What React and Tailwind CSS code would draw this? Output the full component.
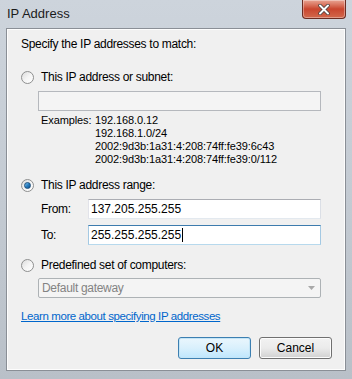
import React from 'react'

const font = { fontFamily: '"Liberation Sans", Arial, sans-serif' }

function Radio({ checked }) {
  return (
    <span className="relative flex h-[13px] w-[13px] shrink-0 items-center justify-center rounded-full border border-[#8e8f8f] bg-gradient-to-br from-[#dcdcdc] via-[#f4f4f4] to-[#ffffff]">
      {checked && (
        <span className="h-[7px] w-[7px] rounded-full border border-[#1a4d7a] bg-gradient-to-br from-[#7cc3f0] via-[#2a7fc0] to-[#0d4f8c]" />
      )}
    </span>
  )
}

function Btn({ children, primary }) {
  return (
    <button
      className={
        primary
          ? 'h-[22px] w-[73px] rounded-[3px] border border-[#3c7fb1] bg-gradient-to-b from-[#eaf6fd] via-[#d9f0fc] to-[#bee6fd] text-[12px] text-black shadow-[inset_0_0_0_1px_#c4e5f6]'
          : 'h-[22px] w-[73px] rounded-[3px] border border-[#707070] bg-gradient-to-b from-[#f2f2f2] via-[#ebebeb] to-[#d1d1d1] text-[12px] text-black shadow-[inset_0_0_0_1px_#fcfcfc]'
      }
    >
      {children}
    </button>
  )
}

export default function App() {
  return (
    <div style={font} className="flex h-[379px] w-[352px] flex-col overflow-hidden bg-gradient-to-b from-[#cdd4dc] via-[#c4cbd3] to-[#b9c0c8] text-[12px] leading-[16px] text-black">
      <div className="flex h-[28px] shrink-0 items-start justify-between pl-[7px] pr-[6px]">
        <span className="mt-[6px] text-[13px] leading-[16px] text-[#1b1b1b]">IP Address</span>
        <div className="flex h-[19px] w-[44px] items-center justify-center rounded-b-[4px] border border-t-0 border-[#6b2c22] bg-gradient-to-b from-[#e8a493] via-[#c9452e] to-[#d2684c] shadow-[inset_0_0_0_1px_rgba(255,255,255,0.35)]">
          <svg width="12" height="11" viewBox="0 0 12 11">
            <path d="M2 1.5 L10 9.5 M10 1.5 L2 9.5" stroke="#3a3a3a" strokeWidth="3.4" strokeLinecap="round" />
            <path d="M2 1.5 L10 9.5 M10 1.5 L2 9.5" stroke="#ffffff" strokeWidth="2" strokeLinecap="round" />
          </svg>
        </div>
      </div>
      <div className="mx-[6px] mb-[8px] flex flex-1 flex-col border border-[#8a8f96] bg-[#f0f0f0] pl-[14px] pr-[24px] pt-[7px] text-[12px] tracking-[-0.3px] shadow-[inset_0_0_0_1px_#fdfdfd]">
        <div>Specify the IP addresses to match:</div>

        <div className="mt-[17px] flex items-center gap-[7px]">
          <Radio />
          <span>This IP address or subnet:</span>
        </div>
        <div className="ml-[17px] mt-[6px] h-[20px] border border-[#b5b8bd] bg-[#f4f4f4]" />
        <div className="ml-[20px] mt-[3px] flex leading-[13px]">
          <span className="w-[54px] shrink-0 text-[11px] tracking-[-0.1px]">Examples:</span>
          <div className="flex flex-col whitespace-nowrap text-[11px] tracking-[-0.1px]">
            <span>192.168.0.12</span>
            <span>192.168.1.0/24</span>
            <span>2002:9d3b:1a31:4:208:74ff:fe39:6c43</span>
            <span>2002:9d3b:1a31:4:208:74ff:fe39:0/112</span>
          </div>
        </div>

        <div className="mt-[11px] flex items-center gap-[7px]">
          <Radio checked />
          <span>This IP address range:</span>
        </div>
        <div className="ml-[20px] mt-[6px] flex items-center">
          <span className="w-[47px]">From:</span>
          <div className="flex h-[20px] flex-1 items-center border border-[#abadb3] border-b-[#e3e9ef] border-l-[#e2e3ea] border-r-[#dbdfe6] bg-white pl-[2px] tracking-normal">137.205.255.255</div>
        </div>
        <div className="ml-[20px] mt-[6px] flex items-center">
          <span className="w-[47px]">To:</span>
          <div className="flex h-[20px] flex-1 items-center border border-[#3d7bad] border-b-[#b7d9ed] border-l-[#a4c9e3] border-r-[#a4c9e3] bg-white pl-[2px] tracking-normal">
            255.255.255.255<span className="ml-[1px] h-[14px] w-[1px] bg-black" />
          </div>
        </div>

        <div className="mt-[12px] flex items-center gap-[7px]">
          <Radio />
          <span>Predefined set of computers:</span>
        </div>
        <div className="ml-[17px] mt-[5px] flex h-[20px] items-center justify-between rounded-[2px] border border-[#adb2b5] bg-[#f4f4f4] pl-[3px] pr-[5px] text-[#838383]">
          <span>Default gateway</span>
          <svg width="7" height="4" viewBox="0 0 7 4">
            <path d="M0 0 H7 L3.5 4 Z" fill="#a8a8a8" />
          </svg>
        </div>

        <a className="mt-[10px] self-start text-[11.5px] tracking-[-0.4px] text-[#0066cc] underline" href="#">Learn more about specifying IP addresses</a>

        <div className="mr-[-11px] mt-[13px] flex justify-end gap-[8px] tracking-normal">
          <Btn primary>OK</Btn>
          <Btn>Cancel</Btn>
        </div>
      </div>
    </div>
  )
}
